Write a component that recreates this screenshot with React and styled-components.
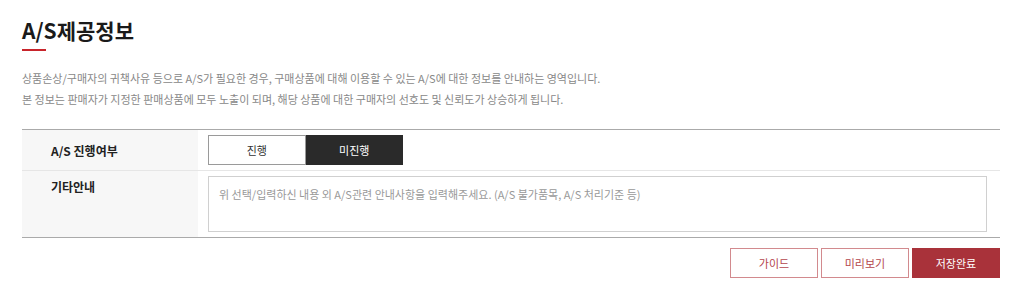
import React, { useState } from 'react';
import styled, { createGlobalStyle } from 'styled-components';

const GlobalStyle = createGlobalStyle`
  html, body {
    margin: 0;
    padding: 0;
    background: #fff;
  }
  body {
    font-family: "Noto Sans CJK KR", "Noto Sans", sans-serif;
    color: #222;
  }
`;

const Wrapper = styled.div`
  padding: 17px 24px 0 22px;
`;

const Title = styled.h2`
  margin: 0;
  font-size: 21px;
  line-height: 26px;
  font-weight: 700;
  color: #1a1a1a;
`;

const TitleBar = styled.div`
  width: 24px;
  height: 2px;
  margin-top: 6px;
  background: #c8242b;
`;

const Description = styled.p`
  margin: 17px 0 0;
  font-size: 11px;
  line-height: 21px;
  color: #888;
`;

const Table = styled.div`
  margin-top: 19px;
  border-top: 1px solid #aaa;
  border-bottom: 1px solid #aaa;
`;

const Row = styled.div`
  display: grid;
  grid-template-columns: 176px 1fr;
  border-top: ${(p) => (p.$first ? 'none' : '1px solid #e6e6e6')};
  min-height: ${(p) => p.$height}px;
`;

const Label = styled.div`
  background: #f7f7f7;
  padding: ${(p) => (p.$top ? '7px 0 0 29px' : '0 0 0 29px')};
  display: flex;
  align-items: ${(p) => (p.$top ? 'flex-start' : 'center')};
  font-size: 12px;
  font-weight: 700;
  color: #222;
`;

const Cell = styled.div`
  padding: 5px 13px 5px 10px;
  display: flex;
  align-items: center;
`;

const Toggle = styled.div`
  display: flex;
`;

const ToggleButton = styled.button`
  width: 97.5px;
  height: 30px;
  box-sizing: border-box;
  border: 1px solid ${(p) => (p.$active ? '#2a2a2a' : '#9a9a9a')};
  background: ${(p) => (p.$active ? '#2a2a2a' : '#fff')};
  color: ${(p) => (p.$active ? '#fff' : '#333')};
  font-family: inherit;
  font-size: 11px;
  cursor: pointer;
  padding: 0;
`;

const TextArea = styled.textarea`
  width: 100%;
  height: 56px;
  box-sizing: border-box;
  border: 1px solid #d0d0d0;
  resize: none;
  padding: 9px 10px;
  font-family: inherit;
  font-size: 11px;
  line-height: 17px;
  color: #333;
  outline: none;

  &::placeholder {
    color: #999;
  }
`;

const Actions = styled.div`
  display: flex;
  justify-content: flex-end;
  gap: 3px;
  margin-top: 10px;
`;

const ActionButton = styled.button`
  width: 88px;
  height: 30px;
  box-sizing: border-box;
  border: 1px solid ${(p) => (p.$primary ? '#a9323a' : '#d28a8e')};
  background: ${(p) => (p.$primary ? '#a9323a' : '#fff')};
  color: ${(p) => (p.$primary ? '#fff' : '#b4464c')};
  font-family: inherit;
  font-size: 11px;
  cursor: pointer;
  padding: 0;
`;

export default function App() {
  const [progress, setProgress] = useState(false);

  return (
    <>
      <GlobalStyle />
      <Wrapper>
        <Title>A/S제공정보</Title>
        <TitleBar />
        <Description>
          상품손상/구매자의 귀책사유 등으로 A/S가 필요한 경우, 구매상품에 대해 이용할 수 있는 A/S에 대한 정보를 안내하는 영역입니다.
          <br />
          본 정보는 판매자가 지정한 판매상품에 모두 노출이 되며, 해당 상품에 대한 구매자의 선호도 및 신뢰도가 상승하게 됩니다.
        </Description>

        <Table>
          <Row $first $height={39}>
            <Label>A/S 진행여부</Label>
            <Cell>
              <Toggle>
                <ToggleButton $active={progress} onClick={() => setProgress(true)}>
                  진행
                </ToggleButton>
                <ToggleButton $active={!progress} onClick={() => setProgress(false)}>
                  미진행
                </ToggleButton>
              </Toggle>
            </Cell>
          </Row>
          <Row $height={66}>
            <Label $top>기타안내</Label>
            <Cell>
              <TextArea placeholder="위 선택/입력하신 내용 외 A/S관련 안내사항을 입력해주세요. (A/S 불가품목, A/S 처리기준 등)" />
            </Cell>
          </Row>
        </Table>

        <Actions>
          <ActionButton>가이드</ActionButton>
          <ActionButton>미리보기</ActionButton>
          <ActionButton $primary>저장완료</ActionButton>
        </Actions>
      </Wrapper>
    </>
  );
}
